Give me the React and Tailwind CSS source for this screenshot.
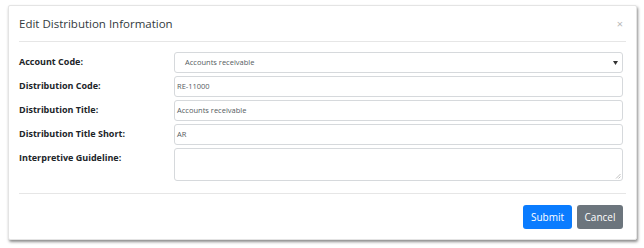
const FIELDS = [
  { label: 'Account Code:', value: 'Accounts receivable', kind: 'select' },
  { label: 'Distribution Code:', value: 'RE-11000', kind: 'input' },
  { label: 'Distribution Title:', value: 'Accounts receivable', kind: 'input' },
  { label: 'Distribution Title Short:', value: 'AR', kind: 'input' },
  { label: 'Interpretive Guideline:', value: '', kind: 'textarea' },
]

function Field({ label, value, kind }) {
  return (
    <div className="grid grid-cols-[155px_449px]">
      <div className="pt-[4px] text-[9px] font-bold leading-[12px] text-[#212529]">{label}</div>
      {kind === 'textarea' ? (
        <div className="relative h-[33px] rounded-[3px] border border-[#d6d9dc] bg-white">
          <svg className="absolute bottom-[1px] right-[1px]" width="6" height="6" viewBox="0 0 6 6">
            <path d="M5.5 1 L1 5.5 M5.5 3.5 L3.5 5.5" stroke="#b0b0b0" strokeWidth="0.8" />
          </svg>
        </div>
      ) : (
        <div className="flex h-[21px] items-center justify-between rounded-[3px] border border-[#d6d9dc] bg-white pr-[4px]">
          <span
            className={[
              'text-[7.5px] leading-none text-[#555b61]',
              kind === 'select' ? 'pl-[10px]' : 'pl-[2px]',
            ].join(' ')}
          >
            {value}
          </span>
          {kind === 'select' && (
            <svg width="5" height="4" viewBox="0 0 5 4">
              <path d="M0 0 L5 0 L2.5 4 Z" fill="#333" />
            </svg>
          )}
        </div>
      )}
    </div>
  )
}

export default function App() {
  return (
    <div className="h-[248px] w-[644px] bg-white pl-[8px] pt-[5px] font-['Open_Sans',sans-serif]">
      <div className="h-[235px] w-[629px] rounded-[2px] border border-[#e4e4e4] bg-white px-[10px] shadow-[1px_2px_3px_rgba(0,0,0,0.45)]">
        <div className="flex h-[36px] items-center justify-between border-b border-[#e6e6e6]">
          <h2 className="text-[11.5px] font-normal text-[#333a40]">Edit Distribution Information</h2>
          <span className="pr-[3px] text-[11px] leading-none text-[#b8b8b8]">×</span>
        </div>
        <div className="flex flex-col gap-[3px] pt-[10px]">
          {FIELDS.map((f) => (
            <Field key={f.label} {...f} />
          ))}
        </div>
        <div className="mt-[12px] flex justify-end gap-[5px] border-t border-[#e6e6e6] pr-[3px] pt-[11px]">
          <button className="h-[24px] w-[49px] rounded-[3px] bg-[#0a7cff] text-[10px] text-white">Submit</button>
          <button className="h-[24px] w-[46px] rounded-[3px] bg-[#6c757d] text-[10px] text-white">Cancel</button>
        </div>
      </div>
    </div>
  )
}
